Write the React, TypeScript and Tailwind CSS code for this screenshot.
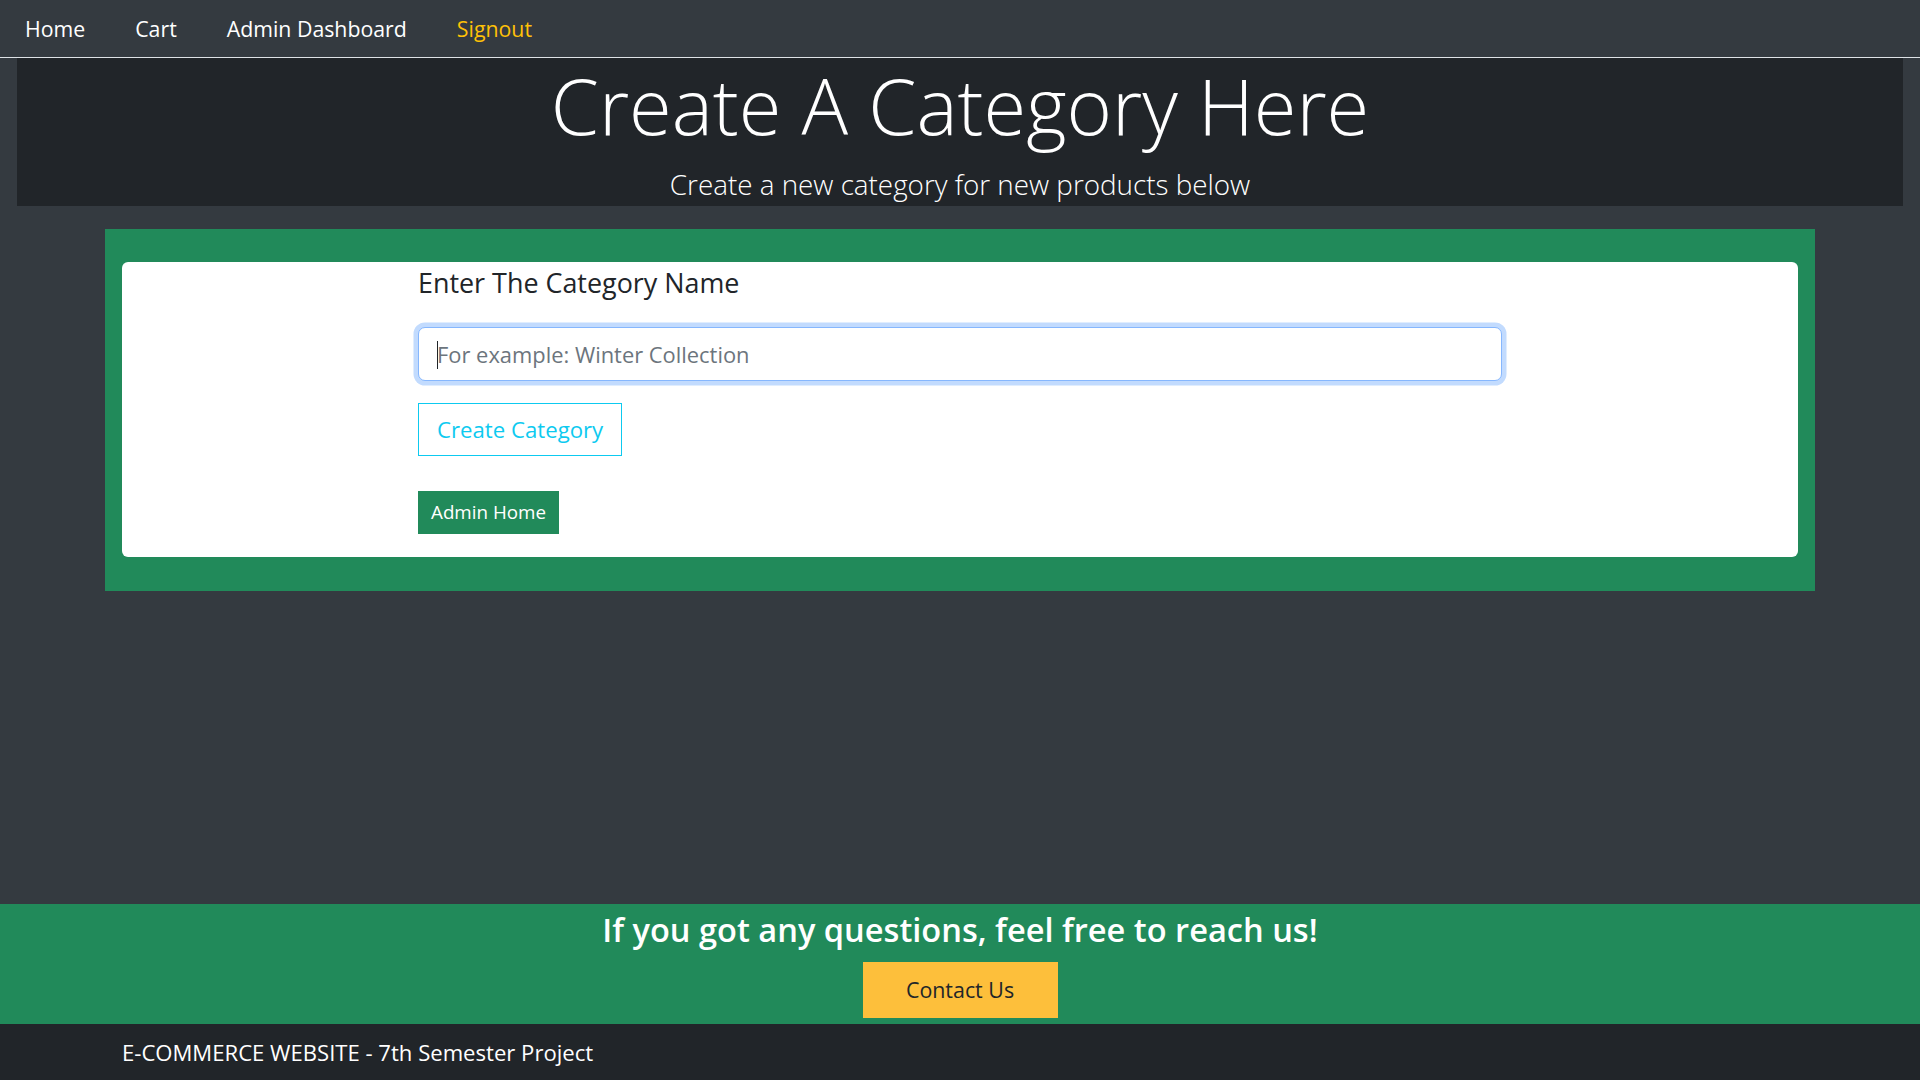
import React from "react";

export default function App() {
  return (
    <div className="min-h-[1080px] w-full bg-[#343a40] font-['Open_Sans',sans-serif] flex flex-col">
      {/* Navbar */}
      <nav className="h-[58px] flex items-center pl-[25px] gap-[50px] text-[21.3px] leading-[1.5] border-b-[1.5px] border-[#dee2e6]">
        <a className="text-white">Home</a>
        <a className="text-white">Cart</a>
        <a className="text-white">Admin Dashboard</a>
        <a className="text-[#ffc107]">Signout</a>
      </nav>

      {/* Header */}
      <header className="mx-[17px] bg-[#212529] h-[148px] flex flex-col items-center text-white">
        <h1 className="mt-px text-[77.6px] font-light leading-[1.2] whitespace-nowrap">Create A Category Here</h1>
        <p className="mt-[12px] text-[27.8px] font-light leading-[1.5] whitespace-nowrap">
          Create a new category for new products below
        </p>
      </header>

      {/* Form panel */}
      <section className="mt-[23px] mx-[105px] bg-[#218a5a] pt-[33px] pb-[34px] px-[17px]">
        <div className="bg-white rounded-[6px] h-[295px] pt-[5px]">
          <div className="w-[1084px] mx-auto">
            <label className="block text-[26.9px] leading-[1.2] text-[#212529] whitespace-nowrap">
              Enter The Category Name
            </label>
            <div className="mt-[28px] relative w-[1084px] h-[54px] rounded-[7px] border border-[#86b7fe] ring-[4.5px] ring-[#c2dbfe] bg-white flex items-center">
              <span className="absolute left-[18px] top-[13px] w-px h-[28px] bg-[#212529]" />
              <input
                className="w-full h-full pl-[18px] pr-4 text-[21.9px] text-[#212529] placeholder:text-[#6c757d] bg-transparent outline-none rounded-[7px]"
                placeholder="For example: Winter Collection"
              />
            </div>
            <button className="mt-[22px] h-[53px] px-[18px] border border-[#0dcaf0] text-[#0dcaf0] text-[22.2px] leading-none bg-transparent flex items-center whitespace-nowrap">
              Create Category
            </button>
            <button className="mt-[35px] h-[43px] px-3 border border-[#218a5a] bg-[#218a5a] text-white text-[18.8px] leading-none flex items-center whitespace-nowrap">
              Admin Home
            </button>
          </div>
        </div>
      </section>

      <div className="flex-1" />

      {/* Contact footer */}
      <section className="bg-[#218a5a] h-[120px] pt-[6px] flex flex-col items-center">
        <h2 className="text-[32.6px] font-semibold leading-[1.25] text-white whitespace-nowrap">
          If you got any questions, feel free to reach us!
        </h2>
        <button className="mt-[11px] w-[195px] h-[56px] bg-[#fdbf3b] text-[#212529] text-[21.4px] leading-none flex items-center justify-center">
          Contact Us
        </button>
      </section>

      <footer className="bg-[#212529] h-[56px] flex items-center pl-[122px]">
        <span className="text-white text-[22.1px] leading-none whitespace-nowrap">
          E-COMMERCE WEBSITE - 7th Semester Project
        </span>
      </footer>
    </div>
  );
}
